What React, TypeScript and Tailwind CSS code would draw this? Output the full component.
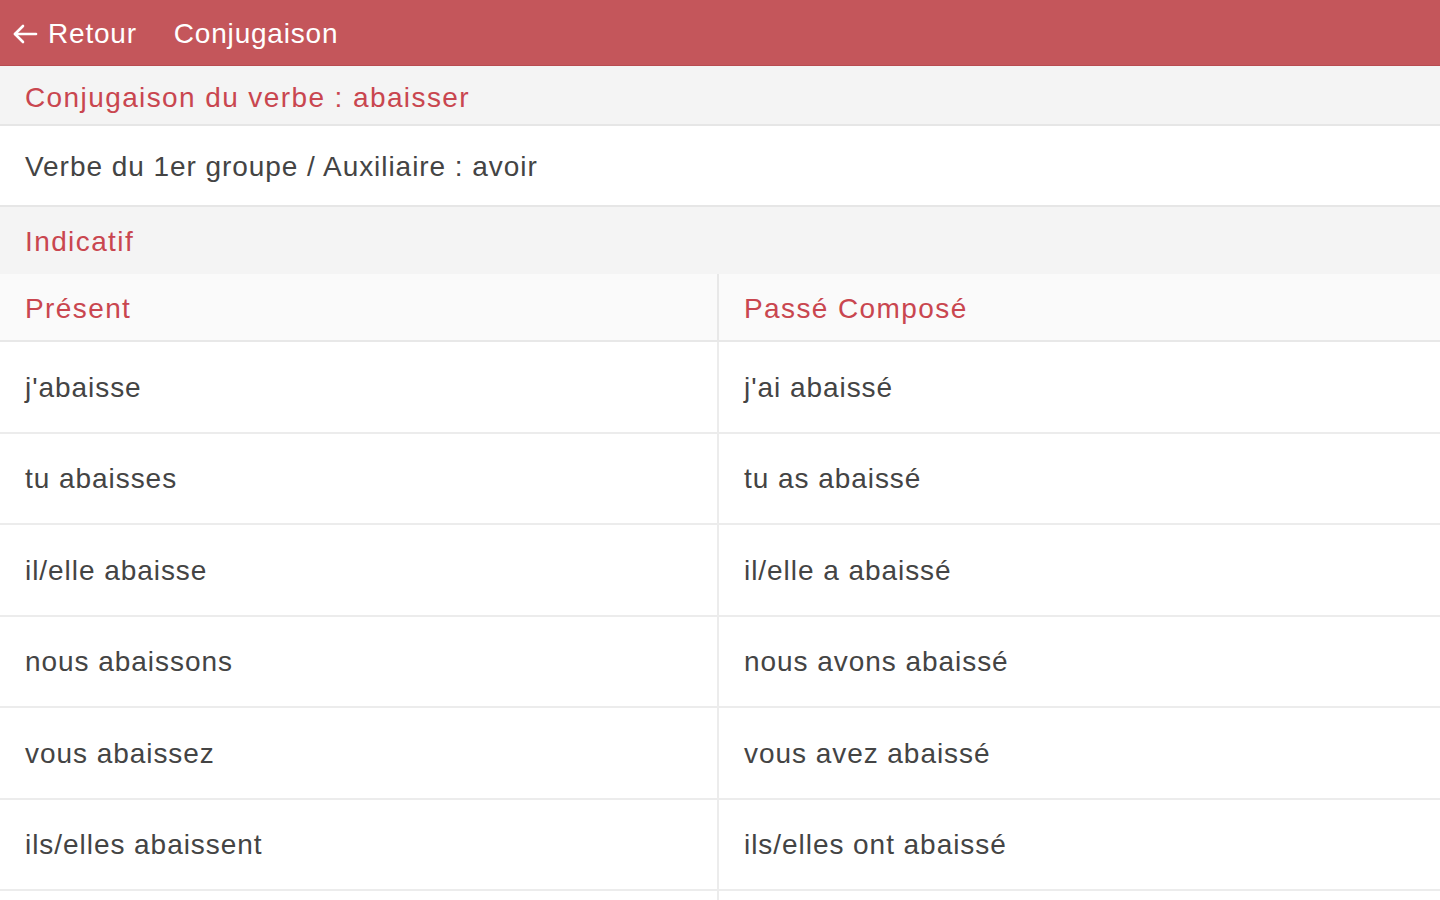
import React from "react";

const rows: [string, string][] = [
  ["j'abaisse", "j'ai abaissé"],
  ["tu abaisses", "tu as abaissé"],
  ["il/elle abaisse", "il/elle a abaissé"],
  ["nous abaissons", "nous avons abaissé"],
  ["vous abaissez", "vous avez abaissé"],
  ["ils/elles abaissent", "ils/elles ont abaissé"],
  ["", ""],
];

export default function App() {
  return (
    <div
      className="w-[1440px] h-[900px] overflow-hidden bg-white text-[28px]"
      style={{ fontFamily: '"Liberation Sans", Arial, sans-serif' }}
    >
      <header className="h-[66px] bg-[#c4565b] flex items-center text-white border-b border-[#b84c51] pt-[3px] tracking-[0.8px]">
        <div className="flex items-center pl-[12px] gap-[10px]">
          <svg width="26" height="22" viewBox="0 0 26 22" fill="none" stroke="white" strokeWidth="2.6" strokeLinecap="round" strokeLinejoin="round">
            <path d="M24 11H3" />
            <path d="M11 3L3 11l8 8" />
          </svg>
          <span className="leading-none">Retour</span>
        </div>
        <span className="ml-[37px] leading-none">Conjugaison</span>
      </header>
      <div className="h-[60px] bg-[#f4f4f4] flex items-center px-[25px] pt-[5px] text-[#c9464f] tracking-[1.4px] border-b-2 border-[#e6e6e6]">
        Conjugaison du verbe : abaisser
      </div>
      <div className="h-[81px] bg-white flex items-center px-[25px] pt-[3px] text-[#444] tracking-[0.95px] border-b-2 border-[#e6e6e6]">
        Verbe du 1er groupe / Auxiliaire : avoir
      </div>
      <div className="h-[67px] bg-[#f4f4f4] flex items-center px-[25px] pt-[3px] text-[#c9464f] tracking-[1.4px]">
        Indicatif
      </div>
      <div className="grid grid-cols-[719px_1fr]">
        <div className="h-[68px] bg-[#fafafa] flex items-center px-[25px] pt-[4px] text-[#c9464f] tracking-[1.4px] border-r-2 border-b-2 border-[#e8e8e8]">
          Présent
        </div>
        <div className="h-[68px] bg-[#fafafa] flex items-center px-[25px] pt-[4px] text-[#c9464f] tracking-[1.4px] border-b-2 border-[#e8e8e8]">
          Passé Composé
        </div>
        {rows.map(([a, b], i) => (
          <React.Fragment key={i}>
            <div className="h-[91.5px] flex items-center px-[25px] pt-[2px] text-[#444] tracking-[0.95px] border-r-2 border-b-2 border-[#ececec]">
              {a}
            </div>
            <div className="h-[91.5px] flex items-center px-[25px] pt-[2px] text-[#444] tracking-[0.95px] border-b-2 border-[#ececec]">
              {b}
            </div>
          </React.Fragment>
        ))}
      </div>
    </div>
  );
}
